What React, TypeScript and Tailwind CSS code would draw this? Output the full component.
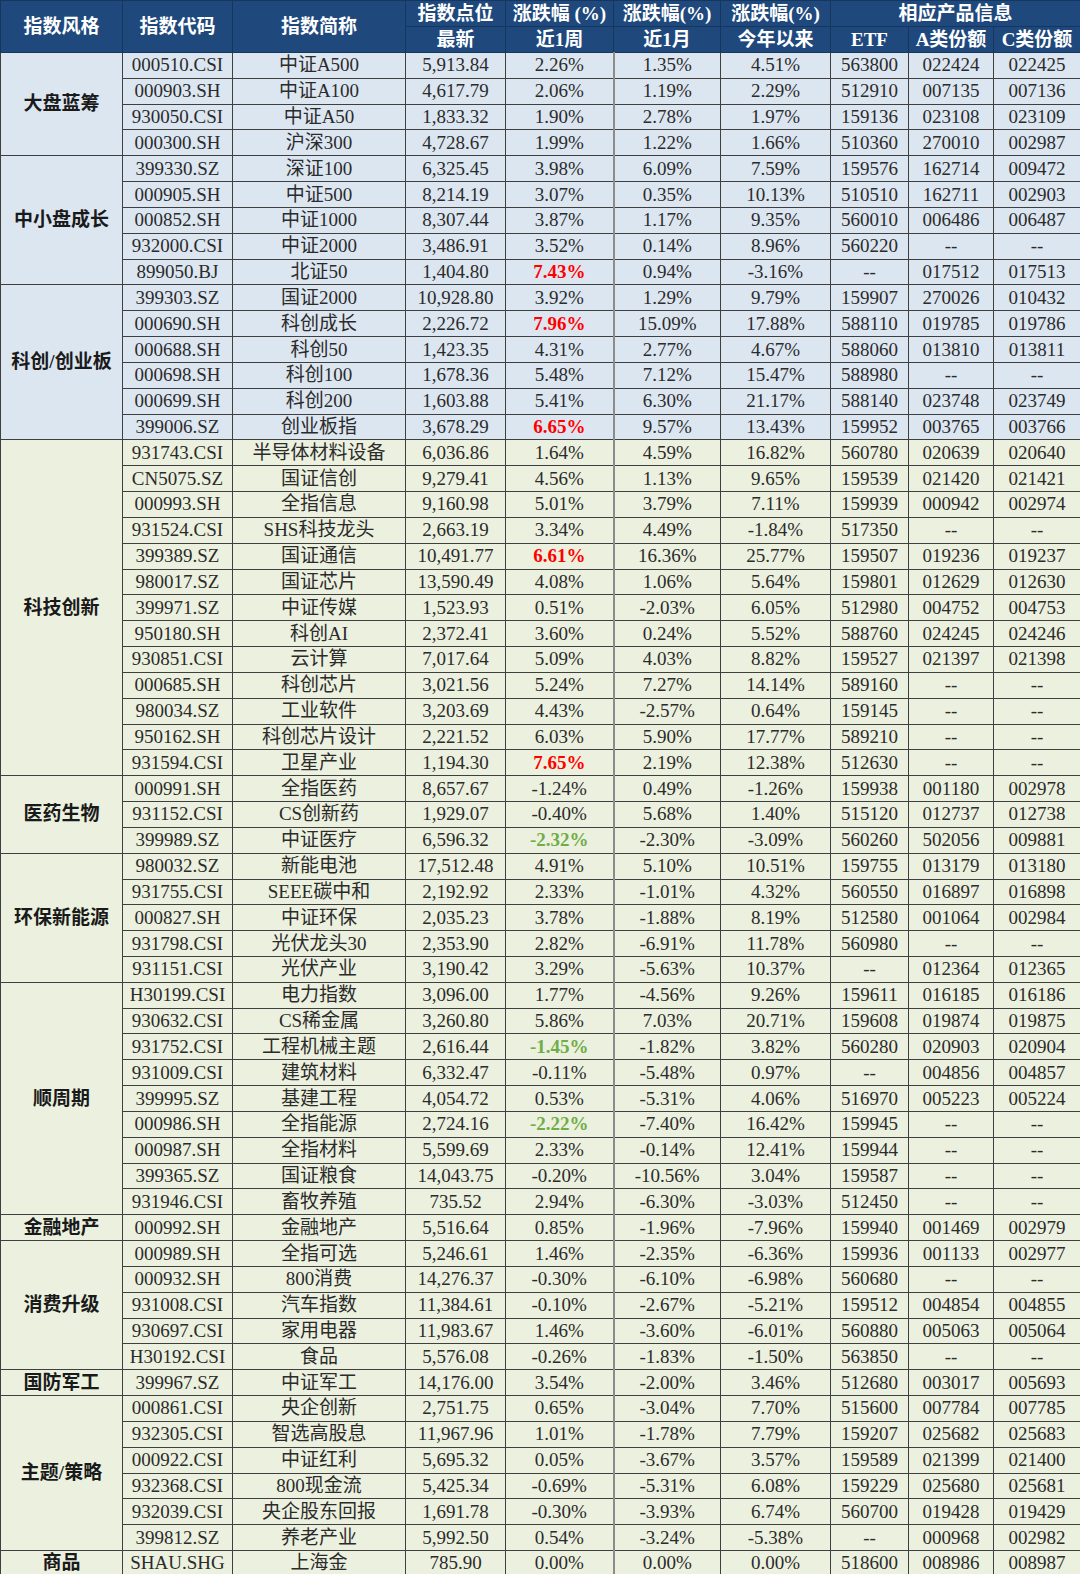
import React from "react";

type Row = string[];
type Group = { name: string; bg: string; rows: Row[] };

const BLUE = "bg-[#dce6f1]";
const GREEN = "bg-[#ebf1de]";

const groups: Group[] = [
  {
    name: "大盘蓝筹",
    bg: BLUE,
    rows: [
      ["000510.CSI", "中证A500", "5,913.84", "2.26%", "1.35%", "4.51%", "563800", "022424", "022425"],
      ["000903.SH", "中证A100", "4,617.79", "2.06%", "1.19%", "2.29%", "512910", "007135", "007136"],
      ["930050.CSI", "中证A50", "1,833.32", "1.90%", "2.78%", "1.97%", "159136", "023108", "023109"],
      ["000300.SH", "沪深300", "4,728.67", "1.99%", "1.22%", "1.66%", "510360", "270010", "002987"],
    ],
  },
  {
    name: "中小盘成长",
    bg: BLUE,
    rows: [
      ["399330.SZ", "深证100", "6,325.45", "3.98%", "6.09%", "7.59%", "159576", "162714", "009472"],
      ["000905.SH", "中证500", "8,214.19", "3.07%", "0.35%", "10.13%", "510510", "162711", "002903"],
      ["000852.SH", "中证1000", "8,307.44", "3.87%", "1.17%", "9.35%", "560010", "006486", "006487"],
      ["932000.CSI", "中证2000", "3,486.91", "3.52%", "0.14%", "8.96%", "560220", "--", "--"],
      ["899050.BJ", "北证50", "1,404.80", "r:7.43%", "0.94%", "-3.16%", "--", "017512", "017513"],
    ],
  },
  {
    name: "科创/创业板",
    bg: BLUE,
    rows: [
      ["399303.SZ", "国证2000", "10,928.80", "3.92%", "1.29%", "9.79%", "159907", "270026", "010432"],
      ["000690.SH", "科创成长", "2,226.72", "r:7.96%", "15.09%", "17.88%", "588110", "019785", "019786"],
      ["000688.SH", "科创50", "1,423.35", "4.31%", "2.77%", "4.67%", "588060", "013810", "013811"],
      ["000698.SH", "科创100", "1,678.36", "5.48%", "7.12%", "15.47%", "588980", "--", "--"],
      ["000699.SH", "科创200", "1,603.88", "5.41%", "6.30%", "21.17%", "588140", "023748", "023749"],
      ["399006.SZ", "创业板指", "3,678.29", "r:6.65%", "9.57%", "13.43%", "159952", "003765", "003766"],
    ],
  },
  {
    name: "科技创新",
    bg: GREEN,
    rows: [
      ["931743.CSI", "半导体材料设备", "6,036.86", "1.64%", "4.59%", "16.82%", "560780", "020639", "020640"],
      ["CN5075.SZ", "国证信创", "9,279.41", "4.56%", "1.13%", "9.65%", "159539", "021420", "021421"],
      ["000993.SH", "全指信息", "9,160.98", "5.01%", "3.79%", "7.11%", "159939", "000942", "002974"],
      ["931524.CSI", "SHS科技龙头", "2,663.19", "3.34%", "4.49%", "-1.84%", "517350", "--", "--"],
      ["399389.SZ", "国证通信", "10,491.77", "r:6.61%", "16.36%", "25.77%", "159507", "019236", "019237"],
      ["980017.SZ", "国证芯片", "13,590.49", "4.08%", "1.06%", "5.64%", "159801", "012629", "012630"],
      ["399971.SZ", "中证传媒", "1,523.93", "0.51%", "-2.03%", "6.05%", "512980", "004752", "004753"],
      ["950180.SH", "科创AI", "2,372.41", "3.60%", "0.24%", "5.52%", "588760", "024245", "024246"],
      ["930851.CSI", "云计算", "7,017.64", "5.09%", "4.03%", "8.82%", "159527", "021397", "021398"],
      ["000685.SH", "科创芯片", "3,021.56", "5.24%", "7.27%", "14.14%", "589160", "--", "--"],
      ["980034.SZ", "工业软件", "3,203.69", "4.43%", "-2.57%", "0.64%", "159145", "--", "--"],
      ["950162.SH", "科创芯片设计", "2,221.52", "6.03%", "5.90%", "17.77%", "589210", "--", "--"],
      ["931594.CSI", "卫星产业", "1,194.30", "r:7.65%", "2.19%", "12.38%", "512630", "--", "--"],
    ],
  },
  {
    name: "医药生物",
    bg: GREEN,
    rows: [
      ["000991.SH", "全指医药", "8,657.67", "-1.24%", "0.49%", "-1.26%", "159938", "001180", "002978"],
      ["931152.CSI", "CS创新药", "1,929.07", "-0.40%", "5.68%", "1.40%", "515120", "012737", "012738"],
      ["399989.SZ", "中证医疗", "6,596.32", "g:-2.32%", "-2.30%", "-3.09%", "560260", "502056", "009881"],
    ],
  },
  {
    name: "环保新能源",
    bg: GREEN,
    rows: [
      ["980032.SZ", "新能电池", "17,512.48", "4.91%", "5.10%", "10.51%", "159755", "013179", "013180"],
      ["931755.CSI", "SEEE碳中和", "2,192.92", "2.33%", "-1.01%", "4.32%", "560550", "016897", "016898"],
      ["000827.SH", "中证环保", "2,035.23", "3.78%", "-1.88%", "8.19%", "512580", "001064", "002984"],
      ["931798.CSI", "光伏龙头30", "2,353.90", "2.82%", "-6.91%", "11.78%", "560980", "--", "--"],
      ["931151.CSI", "光伏产业", "3,190.42", "3.29%", "-5.63%", "10.37%", "--", "012364", "012365"],
    ],
  },
  {
    name: "顺周期",
    bg: GREEN,
    rows: [
      ["H30199.CSI", "电力指数", "3,096.00", "1.77%", "-4.56%", "9.26%", "159611", "016185", "016186"],
      ["930632.CSI", "CS稀金属", "3,260.80", "5.86%", "7.03%", "20.71%", "159608", "019874", "019875"],
      ["931752.CSI", "工程机械主题", "2,616.44", "g:-1.45%", "-1.82%", "3.82%", "560280", "020903", "020904"],
      ["931009.CSI", "建筑材料", "6,332.47", "-0.11%", "-5.48%", "0.97%", "--", "004856", "004857"],
      ["399995.SZ", "基建工程", "4,054.72", "0.53%", "-5.31%", "4.06%", "516970", "005223", "005224"],
      ["000986.SH", "全指能源", "2,724.16", "g:-2.22%", "-7.40%", "16.42%", "159945", "--", "--"],
      ["000987.SH", "全指材料", "5,599.69", "2.33%", "-0.14%", "12.41%", "159944", "--", "--"],
      ["399365.SZ", "国证粮食", "14,043.75", "-0.20%", "-10.56%", "3.04%", "159587", "--", "--"],
      ["931946.CSI", "畜牧养殖", "735.52", "2.94%", "-6.30%", "-3.03%", "512450", "--", "--"],
    ],
  },
  {
    name: "金融地产",
    bg: GREEN,
    rows: [
      ["000992.SH", "金融地产", "5,516.64", "0.85%", "-1.96%", "-7.96%", "159940", "001469", "002979"],
    ],
  },
  {
    name: "消费升级",
    bg: GREEN,
    rows: [
      ["000989.SH", "全指可选", "5,246.61", "1.46%", "-2.35%", "-6.36%", "159936", "001133", "002977"],
      ["000932.SH", "800消费", "14,276.37", "-0.30%", "-6.10%", "-6.98%", "560680", "--", "--"],
      ["931008.CSI", "汽车指数", "11,384.61", "-0.10%", "-2.67%", "-5.21%", "159512", "004854", "004855"],
      ["930697.CSI", "家用电器", "11,983.67", "1.46%", "-3.60%", "-6.01%", "560880", "005063", "005064"],
      ["H30192.CSI", "食品", "5,576.08", "-0.26%", "-1.83%", "-1.50%", "563850", "--", "--"],
    ],
  },
  {
    name: "国防军工",
    bg: GREEN,
    rows: [
      ["399967.SZ", "中证军工", "14,176.00", "3.54%", "-2.00%", "3.46%", "512680", "003017", "005693"],
    ],
  },
  {
    name: "主题/策略",
    bg: GREEN,
    rows: [
      ["000861.CSI", "央企创新", "2,751.75", "0.65%", "-3.04%", "7.70%", "515600", "007784", "007785"],
      ["932305.CSI", "智选高股息", "11,967.96", "1.01%", "-1.78%", "7.79%", "159207", "025682", "025683"],
      ["000922.CSI", "中证红利", "5,695.32", "0.05%", "-3.67%", "3.57%", "159589", "021399", "021400"],
      ["932368.CSI", "800现金流", "5,425.34", "-0.69%", "-5.31%", "6.08%", "159229", "025680", "025681"],
      ["932039.CSI", "央企股东回报", "1,691.78", "-0.30%", "-3.93%", "6.74%", "560700", "019428", "019429"],
      ["399812.SZ", "养老产业", "5,992.50", "0.54%", "-3.24%", "-5.38%", "--", "000968", "002982"],
    ],
  },
  {
    name: "商品",
    bg: GREEN,
    rows: [
      ["SHAU.SHG", "上海金", "785.90", "0.00%", "0.00%", "0.00%", "518600", "008986", "008987"],
    ],
  },
];

const widths = [122, 110, 173, 100, 108, 107, 110, 78, 85, 87];

function Cell({ v, idx }: { v: string; idx: number }) {
  let text = v;
  let cls = "text-[#2b2b2b]";
  if (v.startsWith("r:")) {
    text = v.slice(2);
    cls = "text-[#ff0000] font-bold";
  } else if (v.startsWith("g:")) {
    text = v.slice(2);
    cls = "text-[#70ad47] font-bold";
  }
  const sep = idx === 3 ? "border-r-2 border-r-[#8c8c8c]" : "";
  return (
    <td className={`border border-[#3f3f3f] p-0 text-center whitespace-nowrap ${cls} ${sep}`}>
      {text}
    </td>
  );
}

export default function App() {
  const th = "border border-[#17365d] p-0 text-center font-bold text-white whitespace-nowrap";
  return (
    <div className="w-[1080px] bg-white font-['Liberation_Serif','Noto_Sans_CJK_SC',serif] text-[19px] leading-[22px]">
      <table className="w-[1080px] table-fixed border-collapse">
        <colgroup>
          {widths.map((w, i) => (
            <col key={i} style={{ width: w }} />
          ))}
        </colgroup>
        <thead className="bg-[#1f497d]">
          <tr className="h-[26px]">
            <th rowSpan={2} className={th}>指数风格</th>
            <th rowSpan={2} className={th}>指数代码</th>
            <th rowSpan={2} className={th}>指数简称</th>
            <th className={th}>指数点位</th>
            <th className={th}>涨跌幅 (%)</th>
            <th className={th}>涨跌幅(%)</th>
            <th className={th}>涨跌幅(%)</th>
            <th colSpan={3} className={th}>相应产品信息</th>
          </tr>
          <tr className="h-[26px]">
            <th className={th}>最新</th>
            <th className={th}>近1周</th>
            <th className={th}>近1月</th>
            <th className={th}>今年以来</th>
            <th className={th}>ETF</th>
            <th className={th}>A类份额</th>
            <th className={th}>C类份额</th>
          </tr>
        </thead>
        <tbody>
          {groups.map((g) =>
            g.rows.map((r, ri) => (
              <tr key={g.name + ri} className={`h-[25.83px] ${g.bg}`}>
                {ri === 0 && (
                  <td
                    rowSpan={g.rows.length}
                    className="border border-[#3f3f3f] p-0 text-center align-middle font-bold text-[#1a1a1a] whitespace-nowrap"
                  >
                    {g.name}
                  </td>
                )}
                {r.map((v, i) => (
                  <Cell key={i} v={v} idx={i} />
                ))}
              </tr>
            ))
          )}
        </tbody>
      </table>
    </div>
  );
}
